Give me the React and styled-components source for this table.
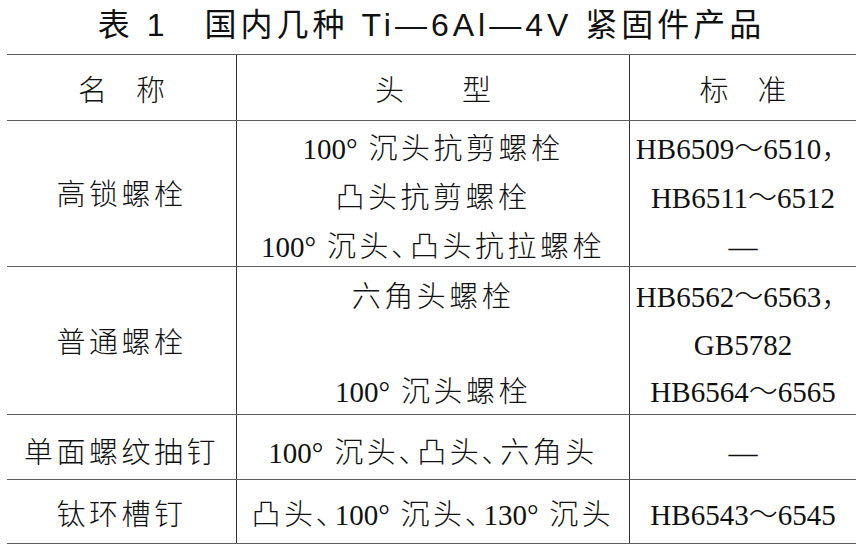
import React from 'react';
import styled, { createGlobalStyle } from 'styled-components';

/* Page */
const GlobalStyle = createGlobalStyle`
    html, body {
        margin: 0;
        padding: 0;
        background: #fff;
    }
    body {
        width: 866px;
        height: 553px;
        overflow: hidden;
        color: #111;
        font-family: "Liberation Serif", "Noto Sans CJK SC", serif;
    }
`;

const Page = styled.div`
    display: flex;
    flex-direction: column;
    padding: 0 10px 0 7px;
`;

const Title = styled.h1`
    margin: 0 0 4px;
    line-height: 50px;
    text-align: center;
    font-family: "Liberation Sans", "Noto Sans CJK SC", sans-serif;
    font-size: 32px;
    font-weight: 400;
    letter-spacing: 4px;
    white-space: pre;
`;

/* Table */
const Table = styled.div`
    width: 849px;
    border-top: 1.5px solid #5e5e5e;
`;

const Row = styled.div`
    display: grid;
    grid-template-columns: 229px 393px 227px;
    grid-template-rows: ${p => p.$h}px;
    border-bottom: 1.5px solid #5e5e5e;

    & > div {
        padding-top: ${p => p.$pt}px;
        line-height: ${p => p.$lh || 47}px;
    }
`;

const Cell = styled.div`
    display: flex;
    flex-direction: column;
    align-items: center;
    justify-content: ${p => (p.$middle ? 'center' : 'flex-start')};
    border-left: ${p => (p.$first ? 'none' : '1px solid #333')};
    font-size: 29px;
    font-weight: 300;
    letter-spacing: ${p => (p.$wide ? 3.5 : 0)}px;
    white-space: pre;
`;

const Line = styled.span`
    display: block;
`;

const Cjk = styled.span`
    letter-spacing: 3.5px;
`;

const Deg = ({ n }) => <>{n}°<Cjk> </Cjk></>;

export default function App() {
    return (
        <Page>
            <GlobalStyle />
            <Title>表 1　国内几种 Ti—6Al—4V 紧固件产品</Title>
            <Table>
                <Row $h={65} $pt={13}>
                    <Cell $first>名　称</Cell>
                    <Cell>头　　型</Cell>
                    <Cell>标　准</Cell>
                </Row>
                <Row $h={145} $pt={4} $lh={49}>
                    <Cell $first $middle $wide>高锁螺栓</Cell>
                    <Cell>
                        <Line><Deg n="100" /><Cjk>沉头抗剪螺栓</Cjk></Line>
                        <Line><Cjk>凸头抗剪螺栓</Cjk></Line>
                        <Line><Deg n="100" /><Cjk>沉头､凸头抗拉螺栓</Cjk></Line>
                    </Cell>
                    <Cell>
                        <Line>HB6509～6510，</Line>
                        <Line>HB6511～6512</Line>
                        <Line>—</Line>
                    </Cell>
                </Row>
                <Row $h={147} $pt={7} $lh={47.5}>
                    <Cell $first $middle $wide>普通螺栓</Cell>
                    <Cell>
                        <Line><Cjk>六角头螺栓</Cjk></Line>
                        <Line> </Line>
                        <Line><Deg n="100" /><Cjk>沉头螺栓</Cjk></Line>
                    </Cell>
                    <Cell>
                        <Line>HB6562～6563，</Line>
                        <Line>GB5782</Line>
                        <Line>HB6564～6565</Line>
                    </Cell>
                </Row>
                <Row $h={64} $pt={15}>
                    <Cell $first $wide>单面螺纹抽钉</Cell>
                    <Cell>
                        <Line><Deg n="100" /><Cjk>沉头､凸头､六角头</Cjk></Line>
                    </Cell>
                    <Cell>—</Cell>
                </Row>
                <Row $h={63} $pt={12}>
                    <Cell $first $wide>钛环槽钉</Cell>
                    <Cell>
                        <Line><Cjk>凸头､</Cjk><Deg n="100" /><Cjk>沉头､</Cjk><Deg n="130" /><Cjk>沉头</Cjk></Line>
                    </Cell>
                    <Cell>HB6543～6545</Cell>
                </Row>
            </Table>
        </Page>
    );
}
